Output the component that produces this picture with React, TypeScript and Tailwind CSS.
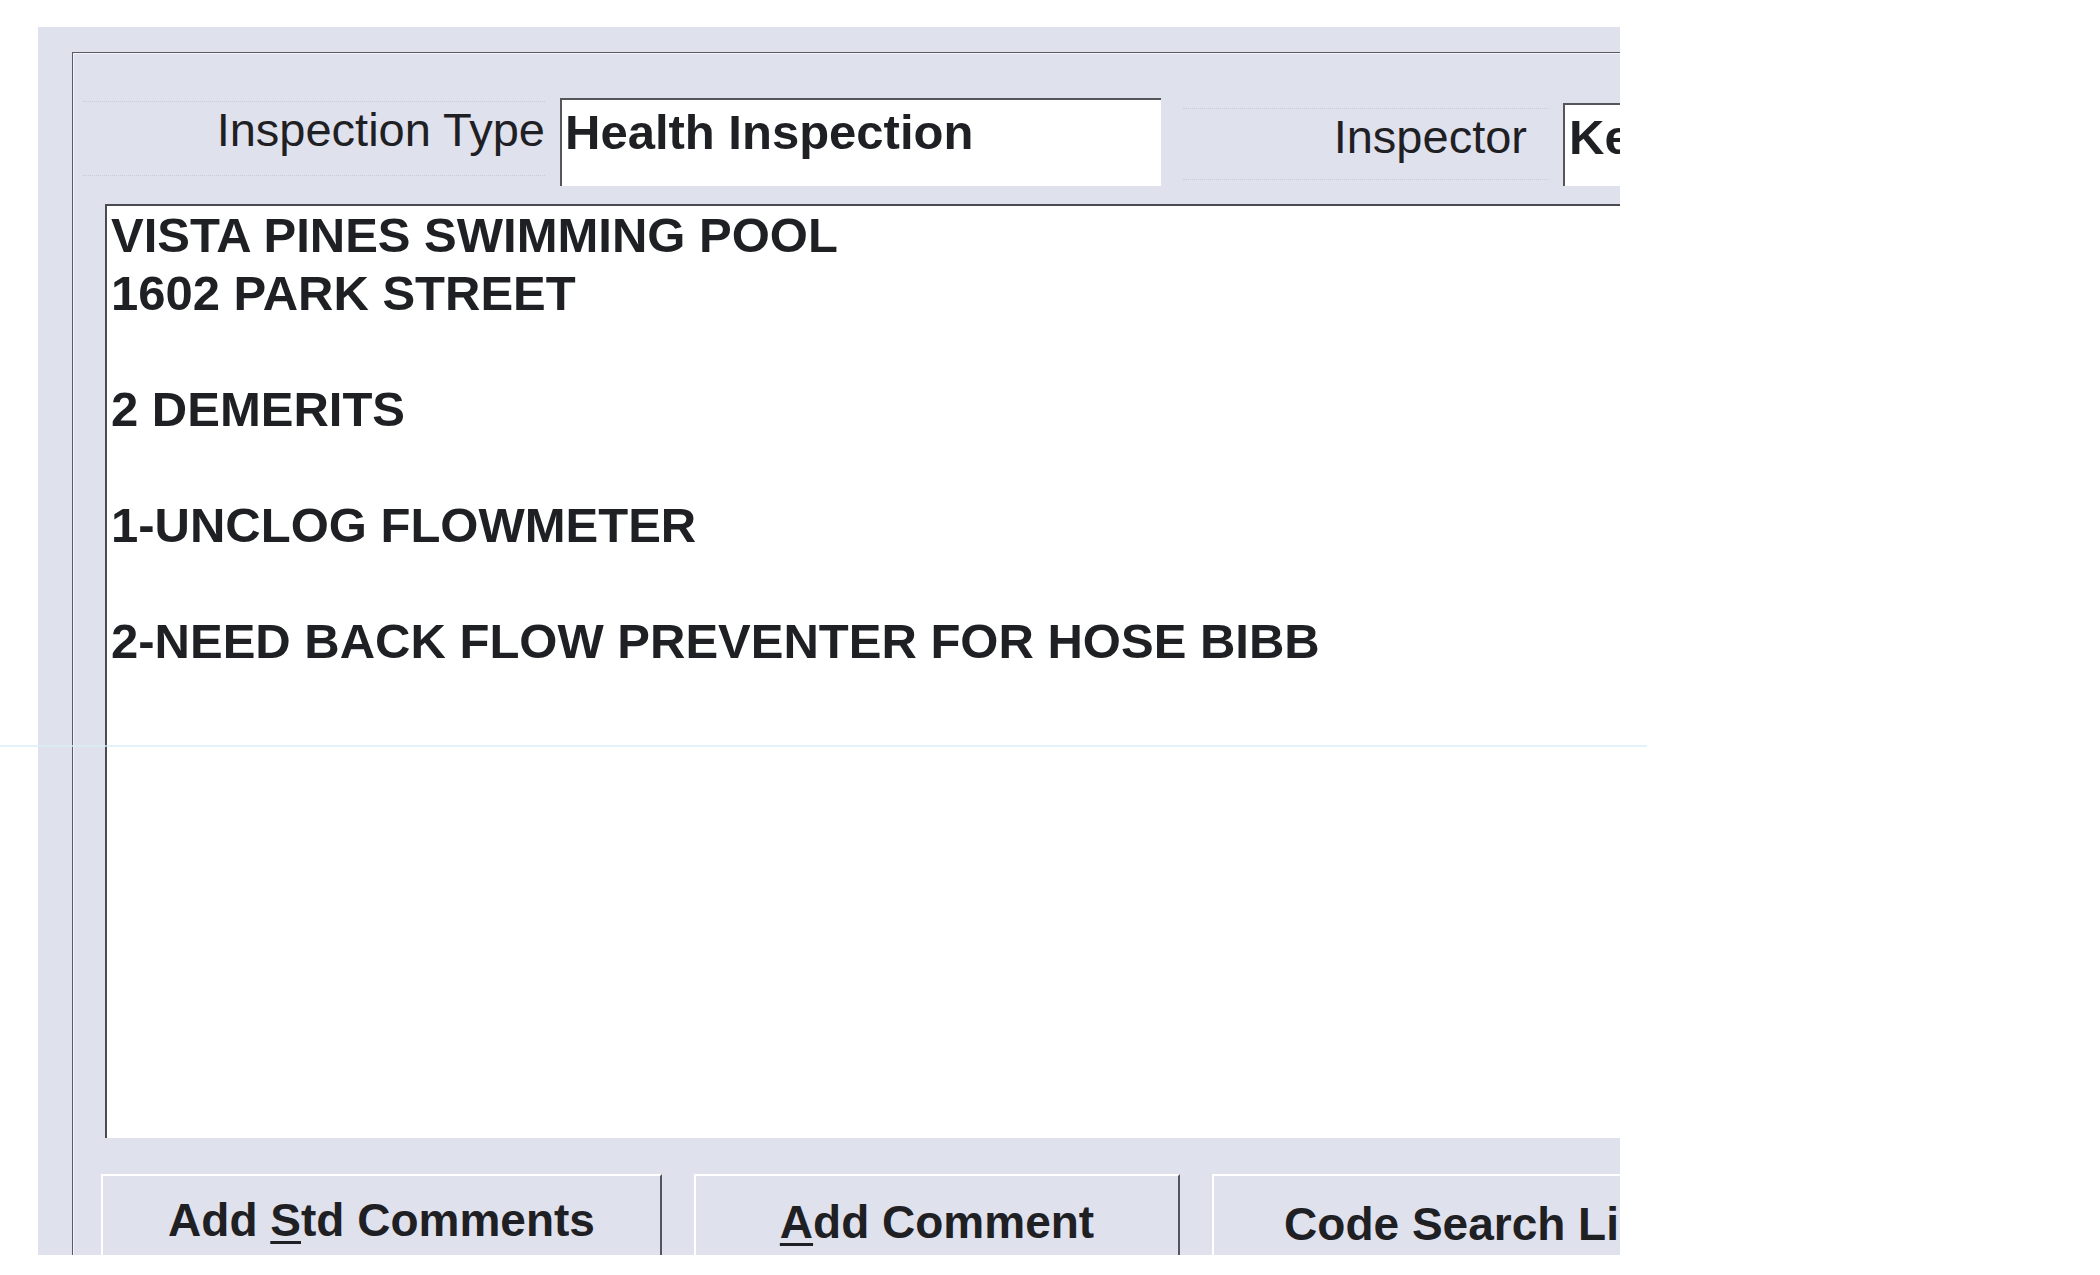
export default function App() {
  return (
    <div className="relative w-[2100px] h-[1275px] overflow-hidden bg-white font-['Liberation_Sans',Arial,sans-serif] text-[#1f2024]">
      <div className="ml-[38px] mt-[27px] w-[1582px] h-[1228px] overflow-hidden bg-[#dfe1ec]">
        <div className="ml-[34px] mt-[25px] w-[1600px] h-[1300px] border-t border-l border-[#5a5a60] shadow-[inset_1px_1px_0_#f4f5fa]">
          {/* header fields */}
          <div className="flex items-start pl-[10px] pt-[45px] whitespace-nowrap">
            <div className="shrink-0 mt-[3px] w-[462px] h-[75px] border-y border-dotted border-[#c9cbd6] text-right text-[47px] leading-[56px]">
              Inspection Type
            </div>
            <div className="shrink-0 ml-[15px] w-[601px] h-[88px] bg-white border-t-2 border-l-2 border-[#55565c] pl-[3px] pt-[3px] text-[49px] font-bold leading-[58px]">
              Health Inspection
            </div>
            <div className="shrink-0 ml-[22px] mt-[10px] w-[366px] h-[72px] border-y border-dotted border-[#c9cbd6] pr-[22px] text-right text-[47px] leading-[56px]">
              Inspector
            </div>
            <div className="shrink-0 ml-[14px] mt-[5px] w-[300px] h-[83px] bg-white border-t-2 border-l-2 border-[#55565c] pl-[4px] pt-[3px] text-[49px] font-bold leading-[58px]">
              Kevin
            </div>
          </div>

          {/* comments area */}
          <div className="ml-[32px] mt-[18px] w-[1600px] h-[934px] bg-white border-t-2 border-l-2 border-[#4a4b50] pl-[4px] text-[49px] font-bold leading-[58px] whitespace-pre">
            {"VISTA PINES SWIMMING POOL\n1602 PARK STREET\n\n2 DEMERITS\n\n1-UNCLOG FLOWMETER\n\n2-NEED BACK FLOW PREVENTER FOR HOSE BIBB"}
          </div>

          {/* buttons */}
          <div className="ml-[28px] mt-[36px] flex items-start gap-[32px] whitespace-nowrap">
            <div className="shrink-0 w-[561px] h-[110px] bg-[#dfe1ec] border-t-2 border-l-2 border-white border-r-2 border-r-[#55565c] pt-[15px] text-center text-[46px] font-bold leading-[58px]">
              Add <span className="underline decoration-[3px] underline-offset-[5px]">S</span>td Comments
            </div>
            <div className="shrink-0 w-[486px] h-[110px] bg-[#dfe1ec] border-t-2 border-l-2 border-white border-r-2 border-r-[#55565c] pt-[17px] text-center text-[46px] font-bold leading-[58px]">
              <span className="underline decoration-[3px] underline-offset-[5px]">A</span>dd Comment
            </div>
            <div className="shrink-0 w-[520px] h-[110px] bg-[#dfe1ec] border-t-2 border-l-2 border-white border-r-2 border-r-[#55565c] pt-[19px] text-center text-[46px] font-bold leading-[58px]">
              Code Search List
            </div>
          </div>
        </div>
      </div>

      {/* faint scanner streak */}
      <div className="absolute left-0 top-[745px] w-[1647px] h-[2px] bg-[#d8eef7] opacity-70" />
    </div>
  );
}
